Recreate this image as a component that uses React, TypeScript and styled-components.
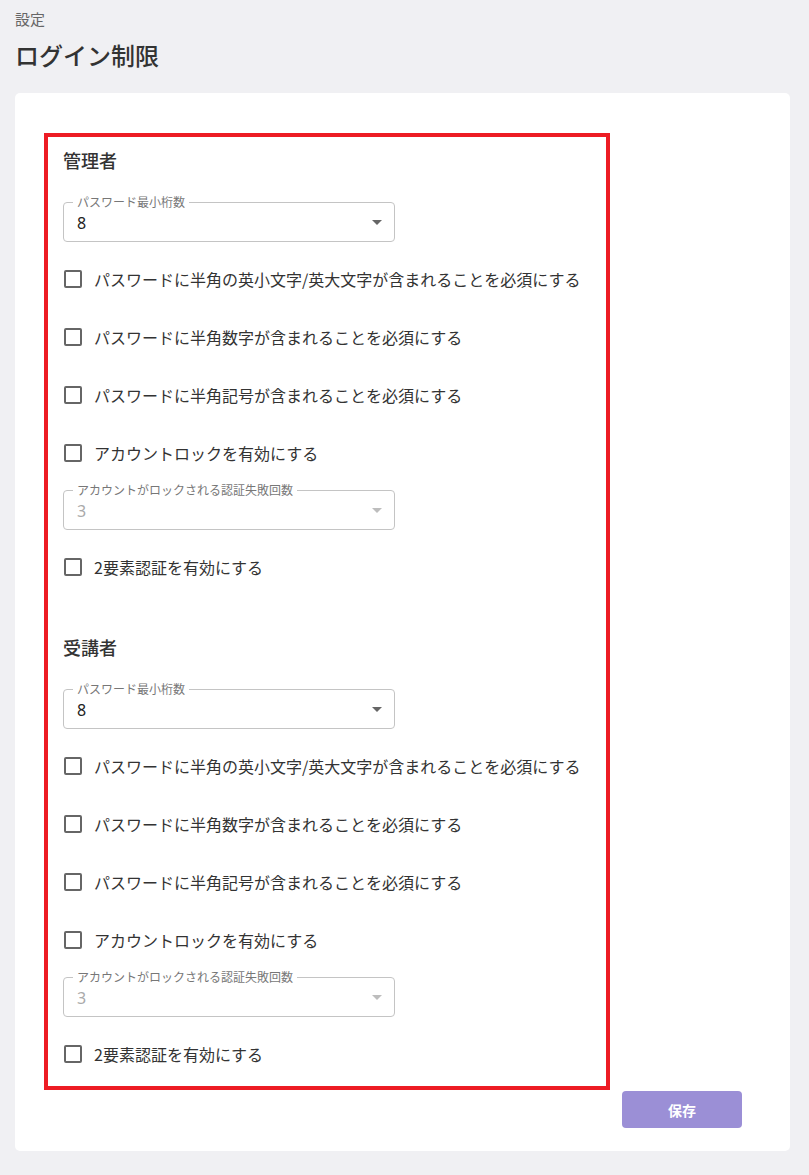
import React from 'react';
import styled, { createGlobalStyle } from 'styled-components';

const GlobalStyle = createGlobalStyle`
	html, body {
		margin: 0;
		padding: 0;
		background: #f0f0f3;
		font-family: 'Noto Sans CJK JP', 'Noto Sans', sans-serif;
		color: #333;
	}
`;

const Page = styled.div`
	padding: 9px 0 24px 15px;
`;

const Breadcrumb = styled.div`
	font-size: 15px;
	line-height: 20px;
	color: #666;
`;

const Title = styled.h1`
	margin: 10px 0 22px;
	font-size: 24px;
	line-height: 32px;
	font-weight: 500;
	color: #333;
`;

const Card = styled.div`
	width: 775px;
	box-sizing: border-box;
	background: #fff;
	border-radius: 5px;
	padding: 40px 0 23px 29px;
`;

const Highlight = styled.div`
	width: 566px;
	box-sizing: border-box;
	border: 4px solid #ed1c24;
	padding: 11px 16px 3px 15px;
`;

const Section = styled.section`
	& + & {
		margin-top: 39px;
	}
`;

const SectionTitle = styled.h2`
	margin: 0 0 22px;
	font-size: 18px;
	line-height: 24px;
	font-weight: 500;
	color: #333;
`;

const SelectSlot = styled.div`
	height: 56px;
	display: flex;
	align-items: center;
`;

const SelectBox = styled.div<{ $disabled?: boolean }>`
	position: relative;
	width: 332px;
	height: 40px;
	box-sizing: border-box;
	border: 1px solid #c4c4c4;
	border-radius: 4px;
	display: flex;
	align-items: center;
	justify-content: space-between;
	padding: 0 5px 0 13px;
	color: ${({ $disabled }) => ($disabled ? '#aaa' : '#222')};
	font-size: 16px;
`;

const SelectLabel = styled.span`
	position: absolute;
	top: -8px;
	left: 9px;
	padding: 0 4px;
	background: #fff;
	font-size: 12px;
	line-height: 14px;
	color: #777;
`;

const SelectValue = styled.span`
	padding-top: 1px;
	font-family: 'Noto Sans', 'Noto Sans CJK JP', sans-serif;
`;

const Arrow = styled.svg<{ $disabled?: boolean }>`
	width: 24px;
	height: 24px;
	fill: ${({ $disabled }) => ($disabled ? '#bdbdbd' : '#666')};
`;

const CheckRow = styled.label`
	height: 58px;
	display: flex;
	align-items: center;
	gap: 12px;
	font-size: 16px;
	color: #333;
`;

const CheckBox = styled.span`
	width: 18px;
	height: 18px;
	margin-left: 1px;
	box-sizing: border-box;
	border: 2px solid #666;
	border-radius: 2px;
	flex-shrink: 0;
`;

const Footer = styled.div`
	display: flex;
	justify-content: flex-end;
	padding-right: 48px;
	margin-top: 1px;
`;

const SaveButton = styled.button`
	width: 120px;
	height: 37px;
	border: none;
	border-radius: 4px;
	background: #9b8fd6;
	color: #fff;
	font-family: 'Noto Sans CJK JP', sans-serif;
	font-size: 14px;
	font-weight: 700;
`;

const Select = ({ label, value, disabled }: { label: string; value: string; disabled?: boolean }) => (
	<SelectSlot>
		<SelectBox $disabled={disabled}>
			<SelectLabel>{label}</SelectLabel>
			<SelectValue>{value}</SelectValue>
			<Arrow $disabled={disabled} viewBox='0 0 24 24'>
				<path d='M7 10l5 5 5-5z' />
			</Arrow>
		</SelectBox>
	</SelectSlot>
);

const Check = ({ children }: { children: React.ReactNode }) => (
	<CheckRow>
		<CheckBox />
		{children}
	</CheckRow>
);

const UserSection = ({ title }: { title: string }) => (
	<Section>
		<SectionTitle>{title}</SectionTitle>
		<Select label='パスワード最小桁数' value='8' />
		<Check>パスワードに半角の英小文字/英大文字が含まれることを必須にする</Check>
		<Check>パスワードに半角数字が含まれることを必須にする</Check>
		<Check>パスワードに半角記号が含まれることを必須にする</Check>
		<Check>アカウントロックを有効にする</Check>
		<Select label='アカウントがロックされる認証失敗回数' value='3' disabled />
		<Check>2要素認証を有効にする</Check>
	</Section>
);

const App = () => {
	return (
		<>
			<GlobalStyle />
			<Page>
				<Breadcrumb>設定</Breadcrumb>
				<Title>ログイン制限</Title>
				<Card>
					<Highlight>
						<UserSection title='管理者' />
						<UserSection title='受講者' />
					</Highlight>
					<Footer>
						<SaveButton>保存</SaveButton>
					</Footer>
				</Card>
			</Page>
		</>
	);
};

export default App;
